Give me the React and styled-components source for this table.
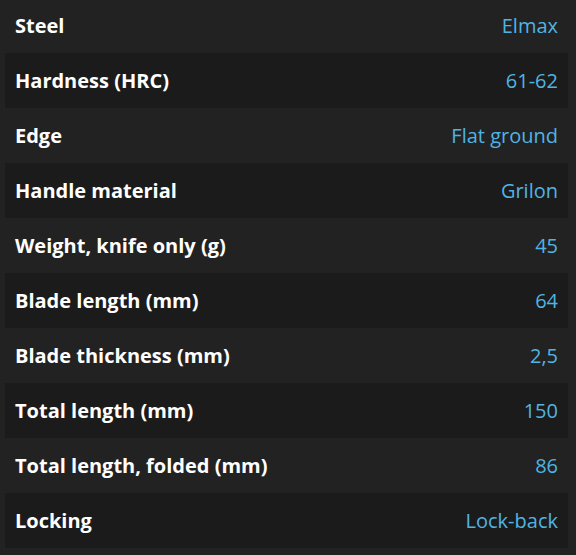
import styled, { createGlobalStyle } from "styled-components";

const specs = [
  ["Steel", "Elmax"],
  ["Hardness (HRC)", "61-62"],
  ["Edge", "Flat ground"],
  ["Handle material", "Grilon"],
  ["Weight, knife only (g)", "45"],
  ["Blade length (mm)", "64"],
  ["Blade thickness (mm)", "2,5"],
  ["Total length (mm)", "150"],
  ["Total length, folded (mm)", "86"],
  ["Locking", "Lock-back"],
];

const GlobalStyle = createGlobalStyle`
  html, body {
    margin: 0;
    padding: 0;
    background: #222222;
    overflow: hidden;
  }
  body {
    font-family: "Open Sans", "Liberation Sans", sans-serif;
  }
`;

export default function App() {
  return (
    <>
      <GlobalStyle />
      <SpecTable>
        {specs.map(([label, value], i) => (
          <SpecRow key={label} $striped={i % 2 === 1}>
            <Label>{label}</Label>
            <Value>{value}</Value>
          </SpecRow>
        ))}
      </SpecTable>
    </>
  );
}

const SpecTable = styled.div`
  display: flex;
  flex-direction: column;
  margin: -2px 8px 0 5px;
`;

const SpecRow = styled.div`
  height: 55px;
  display: flex;
  align-items: center;
  justify-content: space-between;
  padding: 0 10px;
  background: ${(p) => (p.$striped ? "#1b1b1b" : "transparent")};
`;

const Label = styled.span`
  color: #ffffff;
  font-weight: 700;
  font-size: 20px;
`;

const Value = styled.span`
  color: #50b4e2;
  font-size: 20px;
`;
